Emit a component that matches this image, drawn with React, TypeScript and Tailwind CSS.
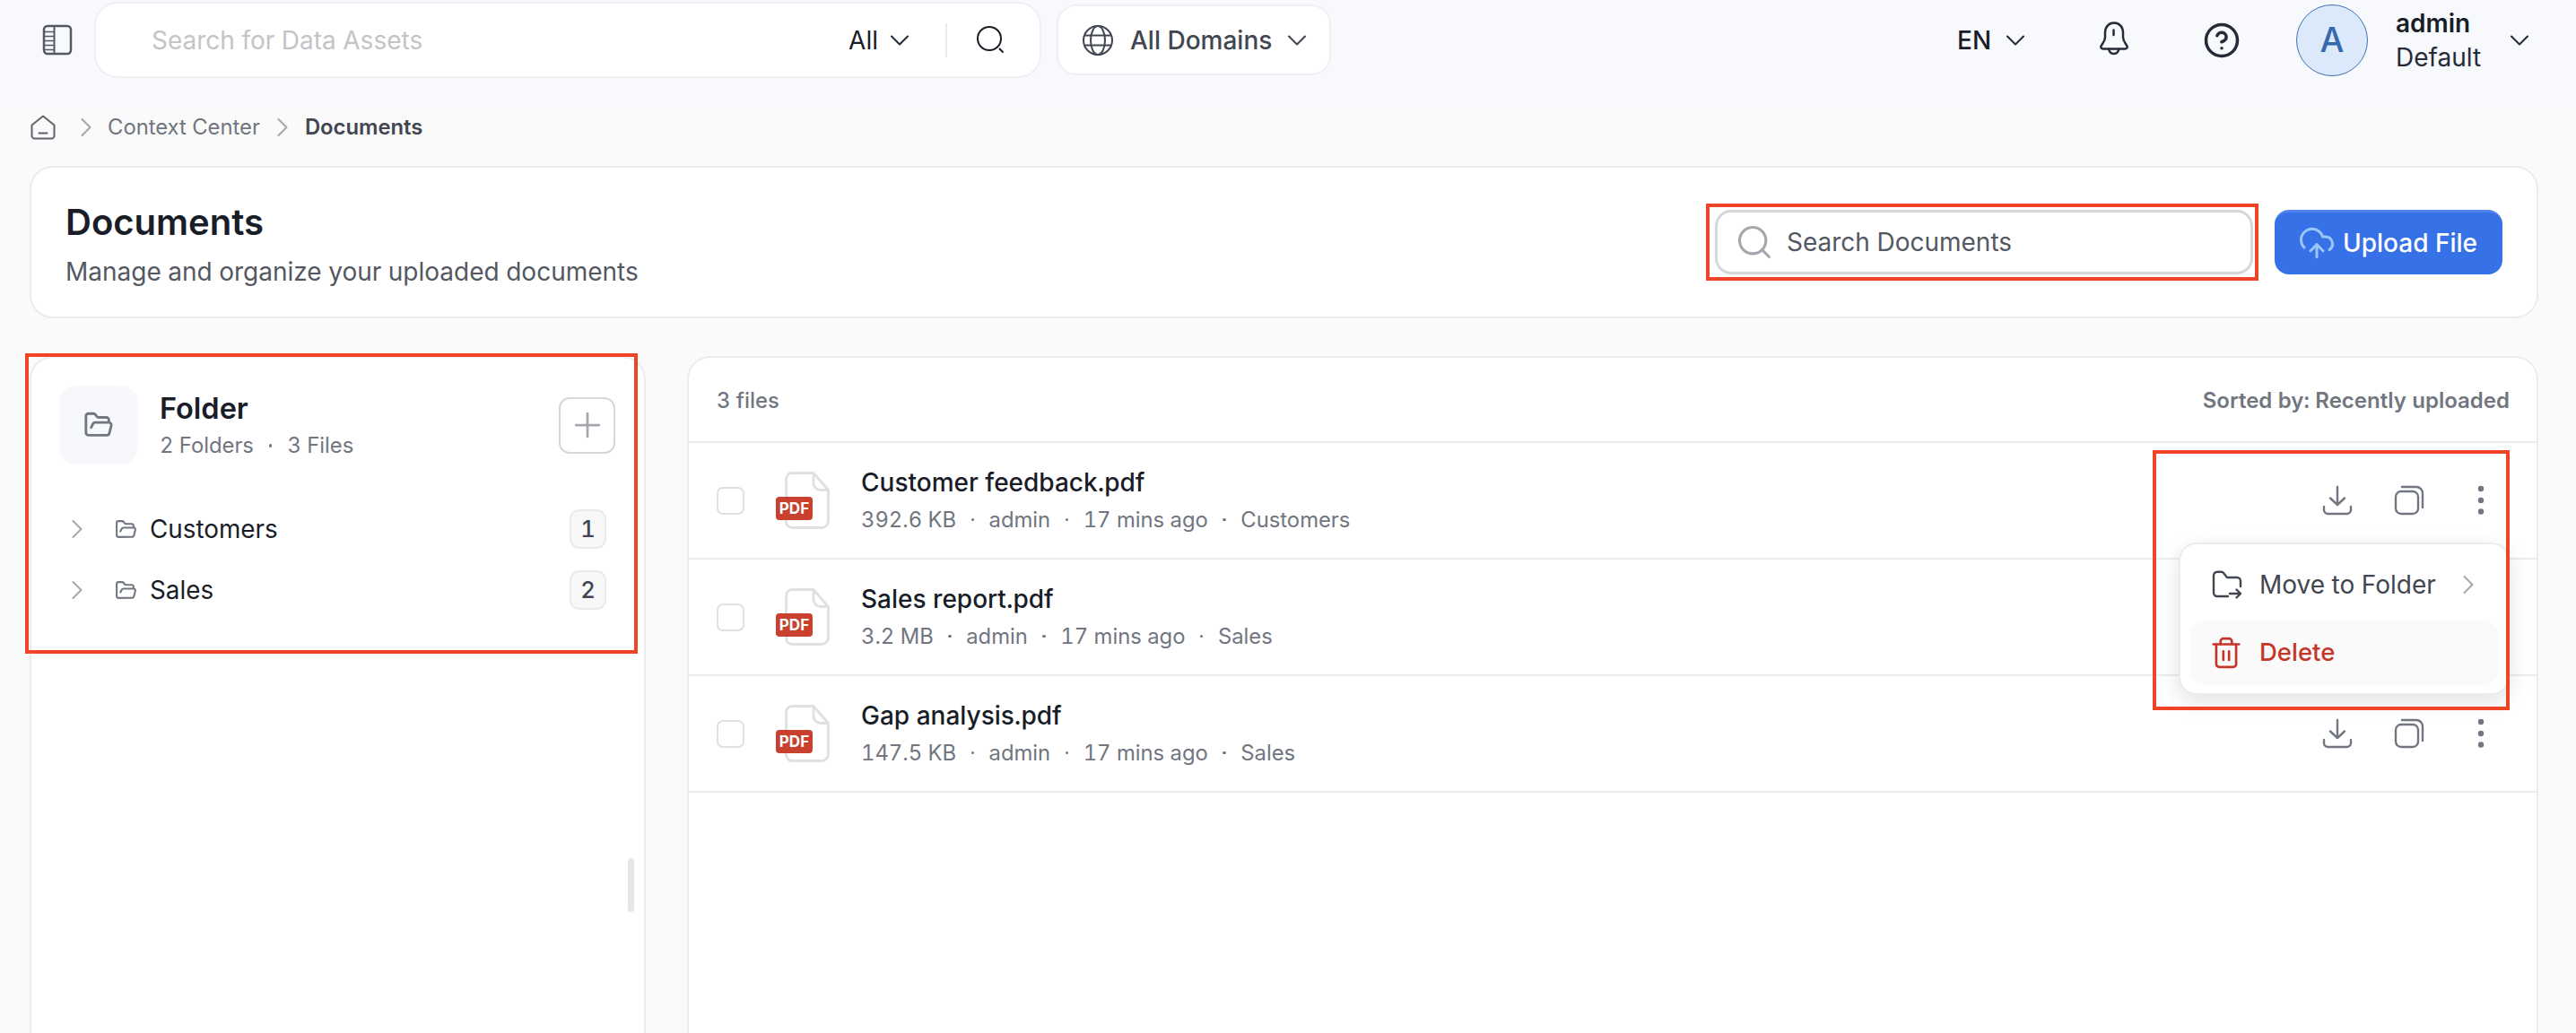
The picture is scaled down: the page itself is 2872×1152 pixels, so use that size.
import React from "react";
import { ChevronDown, ChevronRight, FolderOpen, Plus, Search, CloudUpload, CircleHelp, Trash2 } from "lucide-react";

function DownloadIcon() {
  return (
    <svg width="34" height="34" viewBox="0 0 34 34" fill="none" stroke="#717680" strokeWidth="2.4" strokeLinecap="round" strokeLinejoin="round">
      <path d="M17 2v20M9 14.500l8 7.500 8-7.500" />
      <path d="M2 24v3.500a4.500 4.500 0 0 0 4.500 4.500h21a4.500 4.500 0 0 0 4.500-4.500V24" />
    </svg>
  );
}
function CopyIcon() {
  return (
    <svg width="34" height="34" viewBox="0 0 34 34" fill="none" stroke="#717680" strokeWidth="2.4" strokeLinecap="round" strokeLinejoin="round">
      <rect x="2" y="7" width="25" height="25" rx="6" />
      <path d="M9 2h16a7 7 0 0 1 7 7v16" />
    </svg>
  );
}
function DotsIcon() {
  return (
    <svg width="12" height="34" viewBox="0 0 12 34" fill="#717680">
      <circle cx="6" cy="4" r="3.2" />
      <circle cx="6" cy="17" r="3.2" />
      <circle cx="6" cy="29.500" r="3.2" />
    </svg>
  );
}
function PanelIcon() {
  return (
    <svg width="34" height="35" viewBox="0 0 34 35" fill="none" stroke="#535862" strokeLinecap="butt" strokeLinejoin="round">
      <rect x="2" y="2" width="30" height="31" rx="4" strokeWidth="2.500" />
      <path d="M13.500 2v31" strokeWidth="2" />
      <path d="M2.500 8.500h11M2.500 13.500h11M2.500 18.500h11M2.500 23.500h11M2.500 28.500h11" strokeWidth="1.700" />
    </svg>
  );
}
function HomeIcon() {
  return (
    <svg width="28" height="28" viewBox="0 0 28 28" fill="none" stroke="#5f636c" strokeWidth="2" strokeLinecap="round" strokeLinejoin="round">
      <path d="M1.500 11.500L14 1.500l12.500 10v12a3 3 0 0 1-3 3h-19a3 3 0 0 1-3-3z" />
      <path d="M9.500 20.500h9" strokeWidth="2.200" />
    </svg>
  );
}
function BellIcon() {
  return (
    <svg width="34" height="38" viewBox="0 0 34 38" fill="none" stroke="#252b37" strokeWidth="2.500" strokeLinecap="round" strokeLinejoin="round">
      <path d="M17 1.500c-6 0-10 4.500-10 11v5c0 4-2 6-4 9-1.500 2-.5 4 2 4h24c2.500 0 3.500-2 2-4-2-3-4-5-4-9v-5c0-6.500-4-11-10-11z" />
      <path d="M16.500 9.500v5.500" />
      <path d="M11 31c1 3.500 3 5 5.700 5s4.700-1.500 5.700-5" />
    </svg>
  );
}
function GlobeIcon() {
  return (
    <svg width="36" height="36" viewBox="0 0 36 36" fill="none" stroke="#414651" strokeWidth="2">
      <circle cx="18" cy="18" r="16" />
      <ellipse cx="18" cy="18" rx="8" ry="16" />
      <path d="M3.500 12.500h29M3.500 23.500h29" />
    </svg>
  );
}
function ThinSearch() {
  return (
    <svg width="34" height="34" viewBox="0 0 34 34" fill="none" stroke="#181d27" strokeWidth="2" strokeLinecap="round">
      <circle cx="15" cy="15" r="13" />
      <path d="M26.500 26.500l3.500 3.500" />
    </svg>
  );
}
function MoveFolderIcon() {
  return (
    <svg width="34" height="32" viewBox="0 0 34 32" fill="none" stroke="#414651" strokeWidth="2.400" strokeLinecap="round" strokeLinejoin="round">
      <path d="M32 18v-6a4 4 0 0 0-4-4H17l-4-5a3 3 0 0 0-2.300-1.200H6a4 4 0 0 0-4 4V25a4 4 0 0 0 4 4h12" />
      <path d="M20 26h12M27.500 21.500L32 26l-4.500 4.500" />
    </svg>
  );
}
function PdfIcon() {
  return (
    <div className="relative w-[62px] h-[66px] shrink-0">
      <svg className="absolute left-[10px] top-[1px]" width="50" height="64" viewBox="0 0 50 64" fill="none" stroke="#dfe0e3" strokeWidth="2.800" strokeLinejoin="round">
        <path d="M8 1.500h24l16.500 19V55a7.500 7.500 0 0 1-7.500 7.500H8A6.500 6.500 0 0 1 1.500 56V8A6.500 6.500 0 0 1 8 1.500z" />
        <path d="M32 1.500V12a8 8 0 0 0 8 8.500h8.500" />
      </svg>
      <div className="absolute left-0 top-[29px] w-[41px] h-[26px] rounded-[4px] bg-[#c9412e] text-white text-[17px] font-bold leading-[26px] text-center">PDF</div>
    </div>
  );
}
function Dot() {
  return <span className="w-[3.500px] h-[3.500px] rounded-full bg-[#717680] mx-[16.500px]" />;
}

const files = [
  { name: "Customer feedback.pdf", meta: ["392.6 KB", "admin", "17 mins ago", "Customers"], actions: true },
  { name: "Sales report.pdf", meta: ["3.2 MB", "admin", "17 mins ago", "Sales"], actions: false },
  { name: "Gap analysis.pdf", meta: ["147.5 KB", "admin", "17 mins ago", "Sales"], actions: true },
];

function FileRow({ f }: { f: (typeof files)[number] }) {
  return (
    <div className="h-[130px] border-b-2 border-[#ececee] flex items-center pl-[31px] pr-[56px]">
      <div className="w-[31px] h-[31px] rounded-[7px] border-2 border-[#dfe0e3] bg-white shrink-0" />
      <div className="ml-[35px]"><PdfIcon /></div>
      <div className="ml-[33px] flex flex-col">
        <div className="text-[28px] font-medium leading-[34px] text-[#181d27]">{f.name}</div>
        <div className="mt-[9px] flex items-center text-[23.800px] leading-[32px] text-[#717680]">
          {f.meta.map((m, i) => (
            <React.Fragment key={m}>
              {i > 0 && <Dot />}
              <span>{m}</span>
            </React.Fragment>
          ))}
        </div>
      </div>
      {f.actions && (
        <div className="ml-auto flex items-center gap-[46px]">
          <DownloadIcon />
          <CopyIcon />
          <div className="ml-[11px]"><DotsIcon /></div>
        </div>
      )}
    </div>
  );
}

function FolderRow({ name, count }: { name: string; count: number }) {
  return (
    <div className="h-[68px] flex items-center pl-[2px] pr-[10px]">
      <ChevronRight size={36} strokeWidth={1.4} className="text-[#a4a7ae]" />
      <FolderOpen size={25} strokeWidth={2} className="text-[#717680] ml-[24px]" />
      <div className="ml-[14px] text-[27.800px] leading-[36px] text-[#181d27]">{name}</div>
      <div className="ml-auto w-[41px] h-[44px] rounded-[11px] border-2 border-[#e9eaeb] bg-[#f8f8f9] flex items-center justify-center text-[25.600px] text-[#414651] font-medium">{count}</div>
    </div>
  );
}

export default function App() {
  return (
    <div className="relative w-[2872px] h-[1152px] overflow-hidden bg-[#fafafa] text-[#181d27] tabular-nums" style={{ fontFamily: "Inter, 'Liberation Sans', sans-serif" }}>
      {/* Header */}
      <header className="h-[124px] bg-[#f8f9fd] pt-[2px]">
        <div className="flex items-center h-[85px]">
          <div className="ml-[47px] w-[34px] h-[35px]"><PanelIcon /></div>
          <div className="ml-[24px] w-[1056px] h-[85px] bg-white rounded-[26px] border-2 border-[#eff0f5] flex items-center pl-[62px]">
            <span className="text-[28px] text-[#c3c4c8]">Search for Data Assets</span>
            <span className="ml-auto text-[28px] text-[#181d27]">All</span>
            <ChevronDown size={36} strokeWidth={1.4} className="ml-[6px] text-[#252b37]" />
            <span className="ml-[33px] w-[2px] h-[38px] bg-[#e9eaeb]" />
            <div className="ml-[32px] mr-[37px]"><ThinSearch /></div>
          </div>
          <div className="ml-[17px] w-[306px] h-[79px] bg-white rounded-[22px] border-2 border-[#eff0f5] flex items-center pl-[26px]">
            <GlobeIcon />
            <span className="ml-[18px] text-[28px] font-medium text-[#414651] whitespace-nowrap">All Domains</span>
            <ChevronDown size={36} strokeWidth={1.4} className="ml-[10px] text-[#414651]" />
          </div>
          <div className="ml-[698px] flex items-center">
            <span className="text-[28px] font-medium text-[#181d27] w-[38px]">EN</span>
            <ChevronDown size={36} strokeWidth={1.4} className="ml-[9px] text-[#252b37]" />
            <div className="ml-[75px] h-[38px] -mt-[4px]"><BellIcon /></div>
            <CircleHelp size={42} strokeWidth={2} className="ml-[82px] text-[#252b37]" />
            <div className="ml-[62px] w-[80px] h-[80px] rounded-full bg-[#dbe9fb] border-[1.500px] border-[#3f72b0] flex items-center justify-center text-[38px] font-medium text-[#3569ae]">A</div>
            <div className="ml-[31px] flex flex-col w-[120px]">
              <span className="text-[28px] font-semibold leading-[38px] text-[#181d27]">admin</span>
              <span className="text-[28px] leading-[38px] text-[#252b37]">Default</span>
            </div>
            <ChevronDown size={36} strokeWidth={1.4} className="text-[#252b37]" />
          </div>
        </div>
      </header>

      {/* Breadcrumb */}
      <nav className="h-[61px] flex items-center pl-[34px] pb-[25px]">
        <HomeIcon />
        <ChevronRight size={36} strokeWidth={1.4} className="ml-[16px] text-[#a4a7ae]" />
        <span className="ml-[6px] text-[23.800px] text-[#717680]">Context Center</span>
        <ChevronRight size={36} strokeWidth={1.4} className="ml-[7px] text-[#a4a7ae]" />
        <span className="ml-[7px] text-[23.800px] font-semibold text-[#414651]">Documents</span>
      </nav>

      <main className="pl-[33px] pr-[42px]">
        {/* Title card */}
        <section className="h-[170px] bg-white rounded-[26px] border-2 border-[#ececee] flex items-center pl-[38px] pr-[38px]">
          <div className="flex flex-col pt-[5px]">
            <h1 className="text-[40px] font-semibold leading-[48px] text-[#181d27]">Documents</h1>
            <p className="mt-[12px] text-[28px] leading-[38px] text-[#535862]">Manage and organize your uploaded documents</p>
          </div>
          <div className="ml-auto flex items-center gap-[24px]">
            <div className="w-[600px] h-[72px] rounded-[18px] bg-white border-[3px] border-[#d5d7da] flex items-center pl-[19px]">
              <Search size={44} strokeWidth={1.7} className="text-[#a4a7ae]" />
              <span className="ml-[14px] text-[28px] text-[#535862]">Search Documents</span>
            </div>
            <button className="w-[254px] h-[72px] rounded-[16px] bg-[#3771e8] border-t-[3px] border-[#4e83ee] flex items-center justify-center gap-[8px] pr-[2px] pb-[2px] text-white text-[28px] font-medium">
              <CloudUpload size={42} strokeWidth={1.7} className="text-[#9bc7f7]" />
              Upload File
            </button>
          </div>
        </section>

        {/* Panels */}
        <div className="mt-[42px] flex gap-[46px] h-[800px]">
          <aside className="relative w-[687px] shrink-0 bg-white rounded-t-[26px] border-2 border-b-0 border-[#ececee] pl-[31px] pr-[32px] pt-[31px]">
            <div className="flex items-center">
              <div className="w-[88px] h-[88px] rounded-[20px] bg-[#f7f8fc] flex items-center justify-center">
                <FolderOpen size={34} strokeWidth={2} className="text-[#717680]" />
              </div>
              <div className="ml-[24px] flex flex-col">
                <div className="text-[32.500px] font-semibold leading-[42px] text-[#181d27]">Folder</div>
                <div className="mt-[4px] flex items-center text-[23.800px] leading-[32px] text-[#717680]">
                  <span>2 Folders</span>
                  <span className="w-[3.500px] h-[3.500px] rounded-full bg-[#717680] mx-[17px]" />
                  <span>3 Files</span>
                </div>
              </div>
              <div className="ml-auto w-[63px] h-[63px] rounded-[12px] border-2 border-[#d5d7da] flex items-center justify-center">
                <Plus size={44} strokeWidth={1.5} className="text-[#a4a7ae]" />
              </div>
            </div>
            <div className="mt-[38px]">
              <FolderRow name="Customers" count={1} />
              <FolderRow name="Sales" count={2} />
            </div>
            <div className="absolute left-[665px] top-[558px] w-[7px] h-[60px] rounded-full bg-[#e6e6e7]" />
          </aside>

          <section className="flex-1 min-w-0 bg-white rounded-t-[26px] border-2 border-b-0 border-[#ececee]">
            <div className="h-[95px] border-b-2 border-[#ececee] flex items-center justify-between pl-[31px] pr-[30px] pt-[2px]">
              <span className="text-[23.800px] font-medium text-[#717680]">3 files</span>
              <span className="text-[24px] font-semibold text-[#717680]">Sorted by: Recently uploaded</span>
            </div>
            {files.map((f) => <FileRow key={f.name} f={f} />)}
          </section>
        </div>
      </main>

      {/* Context menu */}
      <div className="absolute left-[2429px] top-[605px] w-[369px] h-[170px] rounded-[20px] bg-white border-2 border-[#ececee] shadow-[0_8px_24px_rgba(10,13,18,0.12)] px-[11px] pt-[10px]">
        <div className="h-[70px] flex items-center pl-[24px]">
          <MoveFolderIcon />
          <span className="ml-[19px] text-[28px] text-[#414651] whitespace-nowrap">Move to Folder</span>
          <ChevronRight size={36} strokeWidth={1.4} className="ml-[18px] text-[#a4a7ae]" />
        </div>
        <div className="mt-[5px] h-[72px] rounded-[16px] bg-[#fafafa] flex items-center pl-[21px]">
          <Trash2 size={38} strokeWidth={1.7} className="text-[#c5362a]" />
          <span className="ml-[18px] text-[27.500px] font-medium text-[#c5362a]">Delete</span>
        </div>
      </div>

      {/* Red annotation frames */}
      <div className="absolute left-[28px] top-[394px] w-[683px] h-[335px] border-[4px] border-[#ef4426]" />
      <div className="absolute left-[1902px] top-[227px] w-[616px] h-[86px] border-[4px] border-[#ef4426]" />
      <div className="absolute left-[2400px] top-[502px] w-[398px] h-[290px] border-[4px] border-[#ef4426]" />
    </div>
  );
}
